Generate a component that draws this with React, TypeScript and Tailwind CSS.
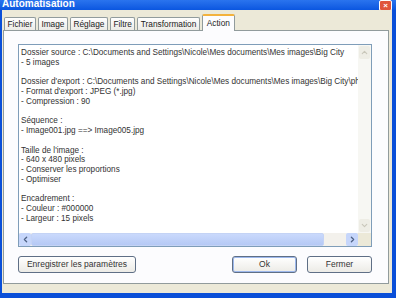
import { ChevronLeft, ChevronRight, ChevronUp, ChevronDown } from 'lucide-react';

const lines = [
  'Dossier source : C:\\Documents and Settings\\Nicole\\Mes documents\\Mes images\\Big City',
  '- 5 images',
  '',
  "Dossier d'export : C:\\Documents and Settings\\Nicole\\Mes documents\\Mes images\\Big City\\photos",
  "- Format d'export : JPEG (*.jpg)",
  '- Compression : 90',
  '',
  'Séquence :',
  '- Image001.jpg ==> Image005.jpg',
  '',
  "Taille de l'image :",
  '- 640 x 480 pixels',
  '- Conserver les proportions',
  '- Optimiser',
  '',
  'Encadrement :',
  '- Couleur : #000000',
  '- Largeur : 15 pixels',
];

const tabs = ['Fichier', 'Image', 'Réglage', 'Filtre', 'Transformation'];

export default function App() {
  return (
    <div
      className="w-[396px] h-[298px] flex flex-col bg-[#0a4fd8] overflow-hidden text-[#222]"
      style={{ fontFamily: '"Liberation Sans", Arial, sans-serif' }}
    >
      {/* title bar */}
      <div className="h-[10px] flex items-end justify-between bg-gradient-to-b from-[#2a74ee] to-[#0a56e0] pl-[2px] pr-[4px] overflow-hidden">
        <span className="text-white font-bold text-[10px] leading-[10px] mb-[1px]">Automatisation</span>
        <div className="w-[13px] h-[11px] -mb-[1px] rounded-[2px] border border-white bg-[#e0553c] flex items-center justify-center text-white text-[8px] font-bold leading-none">
          ×
        </div>
      </div>

      {/* body */}
      <div className="flex-1 ml-[2px] mr-[4px] mb-[5px] bg-[#ece9d8] pl-[1px] pr-[3px] pt-[4px] flex flex-col">
        {/* tabs */}
        <div className="flex items-end h-[16px] pl-[1px] text-[8.3px] relative z-10">
          {tabs.map((t) => (
            <div
              key={t}
              className="h-[13px] mr-[2px] px-[2.5px] flex items-center bg-gradient-to-b from-[#fefefe] to-[#ecebe6] border border-b-0 border-[#919b9c] rounded-t-[2px] leading-none"
            >
              {t}
            </div>
          ))}
          <div className="h-[17px] -mb-[1px] px-[4px] flex items-center bg-[#fcfcfe] border border-b-0 border-[#919b9c] border-t-[2px] border-t-[#f3b23d] rounded-t-[2px] leading-none">
            Action
          </div>
        </div>

        {/* panel */}
        <div className="h-[254px] bg-[#fcfcfe] border border-[#919b9c] pl-[14px] pr-[16px] pt-[13px] flex flex-col">
          <div className="h-[203px] border border-[#7f9db9] bg-white flex flex-col">
            <div className="flex flex-1 min-h-0">
              <div className="flex-1 min-w-0 overflow-hidden pl-[2px] pt-[3px] text-[8.2px] leading-[9.75px] whitespace-nowrap text-[#333]">
                {lines.map((l, i) => (
                  <div key={i} className="h-[9.75px]">
                    {l}
                  </div>
                ))}
              </div>
              {/* vertical scrollbar (disabled) */}
              <div className="w-[13px] bg-[#f7f7f3] flex flex-col justify-between py-[1px]">
                <div className="h-[13px] mx-[1px] rounded-[2px] bg-[#eeede5] flex items-center justify-center">
                  <ChevronUp size={9} strokeWidth={3} color="#c9c7ba" />
                </div>
                <div className="h-[13px] mx-[1px] rounded-[2px] bg-[#eeede5] flex items-center justify-center">
                  <ChevronDown size={9} strokeWidth={3} color="#c9c7ba" />
                </div>
              </div>
            </div>
            {/* horizontal scrollbar */}
            <div className="h-[13px] flex">
              <div className="flex-1 flex bg-[#f3f1ec]">
                <div className="w-[12px] rounded-[2px] bg-[#c6d6fb] flex items-center justify-center">
                  <ChevronLeft size={9} strokeWidth={3.5} color="#4d6185" />
                </div>
                <div className="w-[293px] rounded-[2px] bg-gradient-to-b from-[#cad9fc] to-[#b5c9f5] border border-[#c4d3f5]" />
                <div className="flex-1" />
                <div className="w-[12px] rounded-[2px] bg-[#c6d6fb] flex items-center justify-center">
                  <ChevronRight size={9} strokeWidth={3.5} color="#4d6185" />
                </div>
              </div>
              <div className="w-[13px] bg-[#ece9d8]" />
            </div>
          </div>

          {/* buttons */}
          <div className="flex mt-[9px] text-[8.5px] text-[#333]">
            <div className="w-[118px] h-[17px] rounded-[3px] border border-[#5f6f86] bg-gradient-to-b from-white to-[#ecebe6] flex items-center justify-center">
              Enregistrer les paramètres
            </div>
            <div className="flex-1" />
            <div className="w-[65px] h-[17px] rounded-[3px] border border-[#5f6f86] bg-gradient-to-b from-white to-[#ecebe6] shadow-[inset_0_0_0_1px_#9db8ec] flex items-center justify-center">
              Ok
            </div>
            <div className="w-[65px] h-[17px] ml-[10px] rounded-[3px] border border-[#5f6f86] bg-gradient-to-b from-white to-[#ecebe6] flex items-center justify-center">
              Fermer
            </div>
          </div>
        </div>
      </div>
    </div>
  );
}
